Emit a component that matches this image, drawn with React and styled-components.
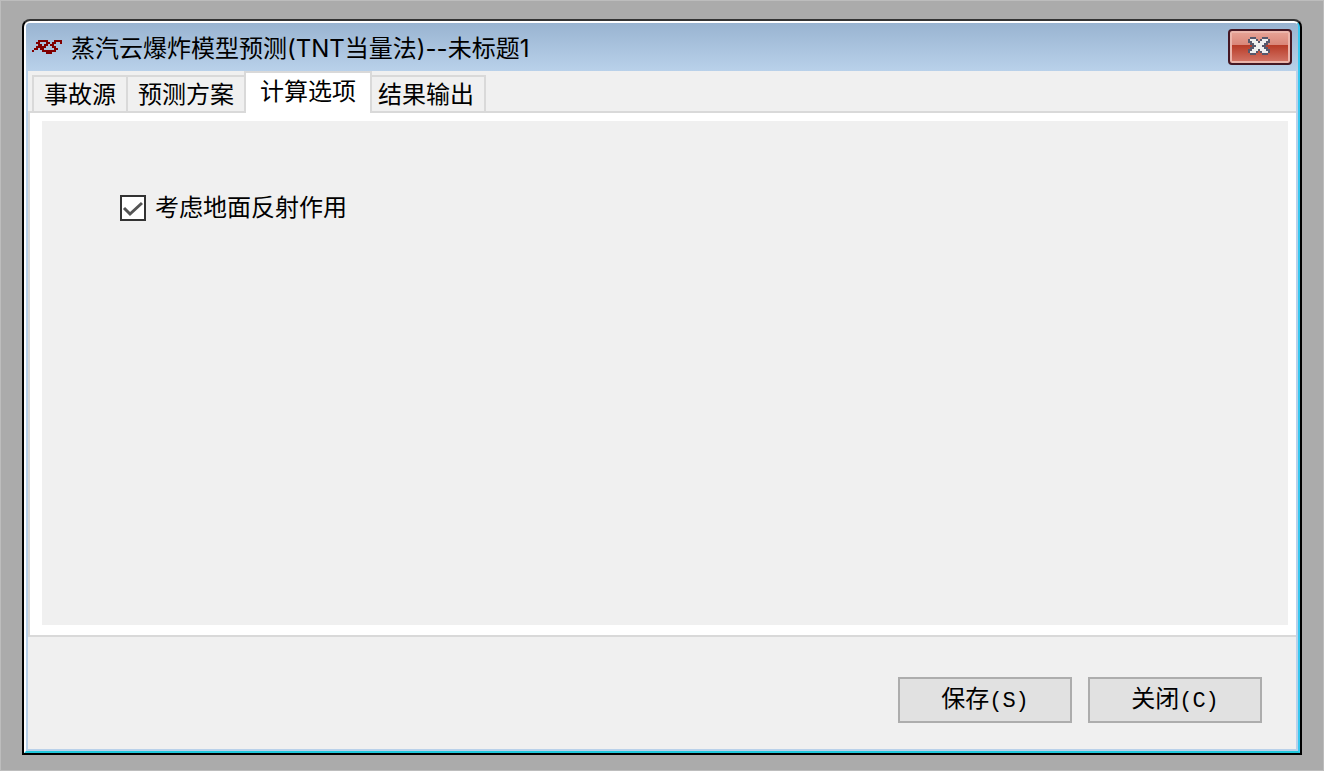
import { useState } from "react";
import styled, { createGlobalStyle } from "styled-components";

const tabs = ["事故源", "预测方案", "计算选项", "结果输出"];

function App() {
  const [active, setActive] = useState(2);
  const [reflect, setReflect] = useState(true);

  return (
    <Desktop>
      <GlobalStyle />
      <Frame>
        <Glow>
          <TitleBar>
            <Logo />
            <Title>蒸汽云爆炸模型预测(TNT当量法)--未标题1</Title>
            <CloseButton type="button" aria-label="关闭">
              <CloseGlyph />
            </CloseButton>
          </TitleBar>
          <Body>
            <TabList role="tablist">
              {tabs.map((name, i) => (
                <Tab
                  key={name}
                  type="button"
                  role="tab"
                  aria-selected={i === active}
                  $active={i === active}
                  onClick={() => setActive(i)}
                >
                  {name}
                </Tab>
              ))}
            </TabList>
            <Page>
              <Panel role="tabpanel">
                <Option>
                  <CheckBox>
                    <input
                      type="checkbox"
                      checked={reflect}
                      onChange={(e) => setReflect(e.target.checked)}
                    />
                    {reflect && <CheckMark />}
                  </CheckBox>
                  考虑地面反射作用
                </Option>
              </Panel>
            </Page>
            <Footer>
              <Button type="button">
                保存<Key>(S)</Key>
              </Button>
              <Button type="button">
                关闭<Key>(C)</Key>
              </Button>
            </Footer>
          </Body>
        </Glow>
      </Frame>
    </Desktop>
  );
}

const Logo = () => (
  <svg width="30" height="14" viewBox="0 0 15 7" shapeRendering="crispEdges" aria-hidden="true">
    <path
      fill="none"
      stroke="#800000"
      d="M3 .5h5M11 .5h4M2 1.5h2M7 1.5h2M10 1.5h2M14 1.5h1M3 2.5h2M6 2.5h2M9 2.5h2M2 3.5h5M10 3.5h2M1 4.5h2M4 4.5h2M11 4.5h2M0 5.5h1M5 5.5h2M7 5.5h5M7 6.5h3"
    />
  </svg>
);

const CloseGlyph = () => (
  <svg width="22" height="18" viewBox="0 0 22 18" shapeRendering="crispEdges" aria-hidden="true">
    <path
      fill="#56586c"
      d="M2 0h6v2h2v2h2V2h2V0h6v2h2v4h-2v2h-2v2h2v2h2v4h-2v2h-6v-2h-2v-2h-2v2H8v2H2v-2H0v-4h2v-2h2V8H2V6H0V2h2z"
    />
    <path
      fill="#efefef"
      d="M2 2h6v2h2v2h2V4h2V2h6v2h-2v2h-2v2h-2v2h2v2h2v2h2v2h-6v-2h-2v-2h-2v2H8v2H2v-2h2v-2h2v-2h2V8H6V6H4V4H2z"
    />
  </svg>
);

const CheckMark = () => (
  <svg width="22" height="22" viewBox="0 0 22 22" aria-hidden="true">
    <path d="M2 11l6 6L20 6" fill="none" stroke="#555" strokeWidth="3" />
  </svg>
);

const GlobalStyle = createGlobalStyle`
  * {
    box-sizing: border-box;
  }

  body {
    margin: 0;
    font-family: "Liberation Sans", "Noto Sans CJK SC", sans-serif;
    font-size: 24px;
    line-height: 32px;
    color: #000;
  }

  button {
    font: inherit;
    color: inherit;
  }
`;

const Desktop = styled.div`
  min-height: 100vh;
  display: flex;
  padding: 18px 21px 15px;
  background: #ababab;
  border: 1px solid #bdbdbd;
`;

const Frame = styled.main`
  flex: 1;
  display: flex;
  border: 2px solid #000;
  border-top-color: #333;
  border-radius: 8px 8px 0 0;
  background: #000;
`;

const Glow = styled.div`
  flex: 1;
  display: flex;
  flex-direction: column;
  border: 2px solid #fff;
  border-right-color: #38c8f0;
  border-bottom-color: #22c8dc;
  border-radius: 6px 6px 0 0;
  background: #b9d1ea;
`;

const TitleBar = styled.header`
  height: 48px;
  display: flex;
  align-items: center;
  gap: 9px;
  padding: 0 6px;
  border-radius: 4px 4px 0 0;
  background: linear-gradient(#99b4d1, #b9d1ea);
`;

const Title = styled.h1`
  flex: 1;
  margin: 0;
  padding-top: 4px;
  font-family: Inter, "Noto Sans CJK SC", sans-serif;
  font-size: 24px;
  font-weight: 400;
`;

const CloseButton = styled.button`
  width: 64px;
  height: 36px;
  display: flex;
  align-items: center;
  justify-content: center;
  padding: 0 2px 2px 0;
  border: 2px solid #451824;
  border-radius: 4px;
  background: linear-gradient(#e8a598, #d98578 45%, #b83c28 45%, #d4786a);
  box-shadow: inset 0 0 0 2px #ebb5ab;
`;

const Body = styled.div`
  flex: 1;
  display: flex;
  flex-direction: column;
  margin: 0 2px 2px;
  background: #f0f0f0;
`;

const TabList = styled.div`
  display: flex;
  align-items: flex-end;
  padding-left: 6px;
`;

/* neighbours share a border, the open tab stands over both of them */
const Tab = styled.button`
  position: relative;
  z-index: ${(props) => (props.$active ? 1 : 0)};
  height: ${(props) => (props.$active ? 42 : 36)}px;
  margin: ${(props) => (props.$active ? "0 -4px -2px -2px" : "0 0 0 -2px")};
  padding: ${(props) => (props.$active ? "0 14px 2px" : "2px 10px 0")};
  border: 2px solid #d9d9d9;
  border-bottom: 0;
  background: ${(props) => (props.$active ? "#fff" : "#f0f0f0")};
`;

const Page = styled.div`
  flex: 1;
  display: flex;
  padding: 8px 8px 10px 12px;
  background: #fff;
  border: 2px solid #d9d9d9;
  border-right: 0;
`;

const Panel = styled.section`
  flex: 1;
  padding: 71px 78px;
  background: #f0f0f0;
`;

const Option = styled.label`
  display: inline-flex;
  align-items: center;
  gap: 9px;
`;

const CheckBox = styled.span`
  position: relative;
  display: flex;

  input {
    appearance: none;
    width: 26px;
    height: 26px;
    margin: 0;
    border: 2px solid #333;
    background: #fff;
  }

  svg {
    position: absolute;
    inset: 2px;
    pointer-events: none;
  }
`;

const Footer = styled.footer`
  display: flex;
  justify-content: flex-end;
  gap: 16px;
  padding: 40px 34px 26px;
`;

const Button = styled.button`
  width: 174px;
  height: 46px;
  padding: 0;
  border: 2px solid #adadad;
  background: #e1e1e1;
`;

const Key = styled.span`
  font-family: "Liberation Mono", monospace;
  font-size: 22px;
`;

export default App;
